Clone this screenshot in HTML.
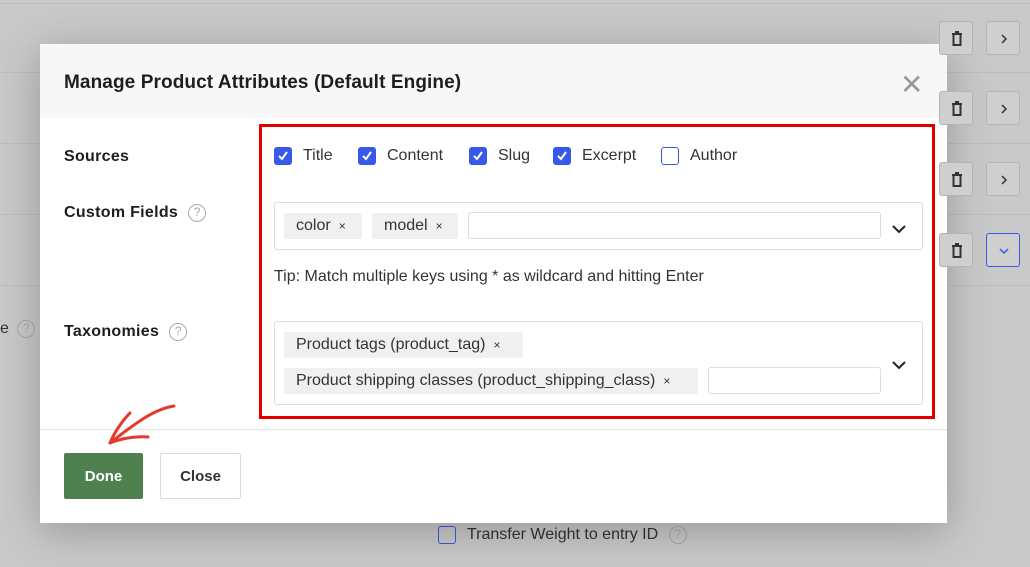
<!DOCTYPE html><html><head><style>
*{box-sizing:border-box;margin:0;padding:0}
body{width:1030px;height:567px;overflow:hidden;background:#c9c9c9;font-family:"Liberation Sans",sans-serif;position:relative;color:#1e1e1e}
.a{position:absolute}
.line{position:absolute;left:0;width:1030px;height:1px;background:#bdbdbd}
.ib{position:absolute;width:34px;height:34px;border:1px solid #b5b5b5;border-radius:3px;background:#cfcfcf;z-index:5}
.ib svg{position:absolute;left:10px;top:9px}
.modal{position:absolute;left:40px;top:44px;width:907px;height:479px;background:#fff;box-shadow:0 8px 40px rgba(0,0,0,.25)}
.hdr{position:absolute;left:0;top:0;width:907px;height:74px;background:#f7f7f7}
.lbl{position:absolute;font-weight:bold;font-size:16px;color:#1e1e1e;letter-spacing:.3px}
.q{display:inline-block;width:18px;height:18px;border:1.5px solid #aaa;border-radius:50%;color:#aaa;font-size:12px;text-align:center;line-height:15px;font-weight:normal;vertical-align:middle;margin-left:10px;letter-spacing:0}
.cb{position:absolute;width:18px;height:18px;border-radius:3px;background:#3858e9;top:103px}
.cb svg{position:absolute;left:3px;top:3px}
.ct{position:absolute;top:103px;font-size:16px;color:#333}
.box{position:absolute;border:1px solid #ddd;border-radius:3px;background:#fff}
.tag{position:absolute;background:#f0f0f0;border-radius:2px;height:26px;font-size:16px;color:#333;line-height:26px;padding:0 12px;white-space:nowrap}
.tag span{font-size:12px;margin-left:8px}
.inp{position:absolute;border:1px solid #ddd;border-radius:3px;height:27px;background:#fff}
.chev{position:absolute;font-size:14px}
</style></head><body>
<div class="line" style="top:3px"></div>
<div class="line" style="top:72px"></div>
<div class="line" style="top:143px"></div>
<div class="line" style="top:214px"></div>
<div class="line" style="top:285px"></div>
<div class="ib" style="left:939px;top:21px"><svg width="14" height="16"><path d="M2 3h10M5 1h4M3.5 4v10h7V4" stroke="#333" stroke-width="2" fill="none"/></svg></div><div class="ib" style="left:986px;top:21px"><svg width="14" height="16"><path d="M5 4l4 4-4 4" stroke="#333" stroke-width="1.5" fill="none"/></svg></div>
<div class="ib" style="left:939px;top:91px"><svg width="14" height="16"><path d="M2 3h10M5 1h4M3.5 4v10h7V4" stroke="#333" stroke-width="2" fill="none"/></svg></div><div class="ib" style="left:986px;top:91px"><svg width="14" height="16"><path d="M5 4l4 4-4 4" stroke="#333" stroke-width="1.5" fill="none"/></svg></div>
<div class="ib" style="left:939px;top:162px"><svg width="14" height="16"><path d="M2 3h10M5 1h4M3.5 4v10h7V4" stroke="#333" stroke-width="2" fill="none"/></svg></div><div class="ib" style="left:986px;top:162px"><svg width="14" height="16"><path d="M5 4l4 4-4 4" stroke="#333" stroke-width="1.5" fill="none"/></svg></div>
<div class="ib" style="left:939px;top:233px"><svg width="14" height="16"><path d="M2 3h10M5 1h4M3.5 4v10h7V4" stroke="#333" stroke-width="2" fill="none"/></svg></div><div class="ib" style="left:986px;top:233px;border-color:#3858e9"><svg width="14" height="16"><path d="M3 6l4 4 4-4" stroke="#3858e9" stroke-width="1.5" fill="none"/></svg></div>
<div class="a" style="left:0;top:320px;font-size:16px;color:#333">e <span class="q" style="margin-left:4px">?</span></div>
<div class="a" style="left:438px;top:526px;width:18px;height:18px;border:1.5px solid #3858e9;border-radius:3px"></div>
<div class="a" style="left:467px;top:526px;font-size:16px;color:#333">Transfer Weight to entry ID <span class="q" style="margin-left:6px">?</span></div>
<div class="modal">
<div class="hdr"></div>
<div class="lbl" style="left:24px;top:28px;font-size:19px;letter-spacing:.1px">Manage Product Attributes (Default Engine)</div>
<div class="a" style="left:860px;top:24px;font-size:28px;color:#999;font-weight:300">✕</div>
<div class="lbl" style="left:24px;top:104px">Sources</div>
<div class="lbl" style="left:24px;top:160px">Custom Fields<span class="q">?</span></div>
<div class="lbl" style="left:24px;top:279px">Taxonomies<span class="q">?</span></div>
<div class="a" style="left:219px;top:80px;width:676px;height:295px;border:3px solid #e00000"></div>
<div class="cb" style="left:234px"><svg width="12" height="12"><path d="M2 6l3 3 5-7" stroke="#fff" stroke-width="2" fill="none"/></svg></div><div class="ct" style="left:263px">Title</div>
<div class="cb" style="left:318px"><svg width="12" height="12"><path d="M2 6l3 3 5-7" stroke="#fff" stroke-width="2" fill="none"/></svg></div><div class="ct" style="left:347px">Content</div>
<div class="cb" style="left:429px"><svg width="12" height="12"><path d="M2 6l3 3 5-7" stroke="#fff" stroke-width="2" fill="none"/></svg></div><div class="ct" style="left:458px">Slug</div>
<div class="cb" style="left:513px"><svg width="12" height="12"><path d="M2 6l3 3 5-7" stroke="#fff" stroke-width="2" fill="none"/></svg></div><div class="ct" style="left:542px">Excerpt</div>
<div class="cb" style="left:621px;background:#fff;border:1.5px solid #3858e9"></div><div class="ct" style="left:650px">Author</div>
<div class="box" style="left:234px;top:158px;width:649px;height:48px"></div>
<div class="tag" style="left:244px;top:169px;width:78px">color<span>×</span></div>
<div class="tag" style="left:332px;top:169px;width:86px">model<span>×</span></div>
<div class="inp" style="left:428px;top:168px;width:413px"></div>
<div class="chev" style="left:852px;top:177px"><svg width="14" height="10"><path d="M1 2l6 6 6-6" stroke="#222" stroke-width="2" fill="none"/></svg></div>
<div class="a" style="left:234px;top:224px;font-size:16px;color:#333">Tip: Match multiple keys using * as wildcard and hitting Enter</div>
<div class="box" style="left:234px;top:277px;width:649px;height:84px"></div>
<div class="tag" style="left:244px;top:288px;width:239px">Product tags (product_tag)<span>×</span></div>
<div class="tag" style="left:244px;top:324px;width:414px">Product shipping classes (product_shipping_class)<span>×</span></div>
<div class="inp" style="left:668px;top:323px;width:173px"></div>
<div class="chev" style="left:852px;top:313px"><svg width="14" height="10"><path d="M1 2l6 6 6-6" stroke="#222" stroke-width="2" fill="none"/></svg></div>
<div class="a" style="left:0;top:385px;width:907px;height:1px;background:#e5e5e5"></div>
<svg class="a" style="left:60px;top:355px" width="90" height="50"><path d="M74 7 C55 10 38 22 10 44 M10 44 C14 34 22 22 30 14 M10 44 C20 40 34 37 48 38" stroke="#e53a2b" stroke-width="3" fill="none" stroke-linecap="round"/></svg>
<div class="a" style="left:24px;top:409px;width:79px;height:46px;background:#4e8050;border-radius:2px;color:#fff;font-weight:bold;font-size:15px;text-align:center;line-height:48px">Done</div>
<div class="a" style="left:120px;top:409px;width:81px;height:46px;border:1px solid #ddd;border-radius:2px;font-weight:bold;font-size:15px;text-align:center;line-height:46px;color:#333">Close</div>
</div>
</body></html>
